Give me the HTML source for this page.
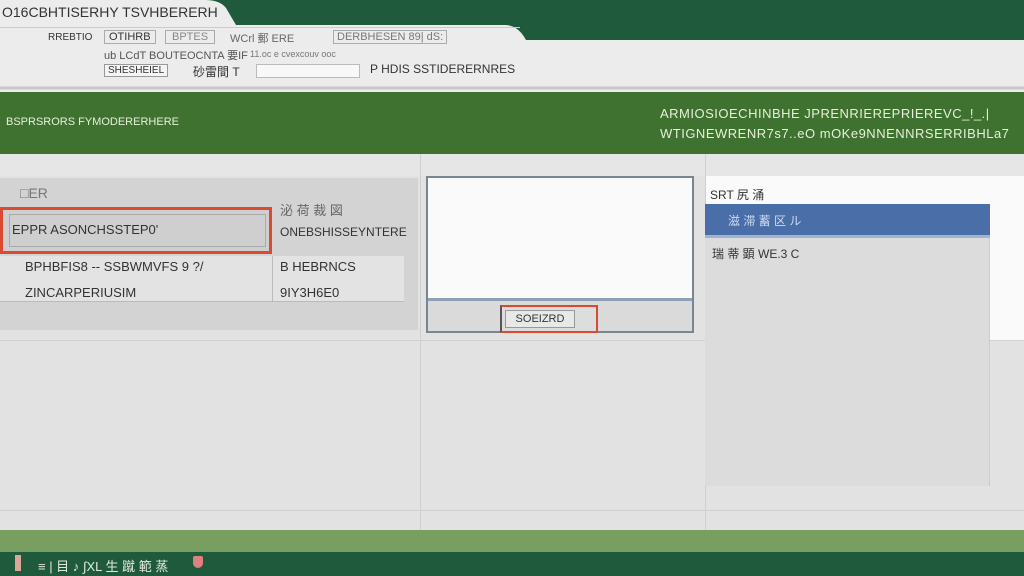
<!DOCTYPE html>
<html><head><meta charset="utf-8"><style>
*{margin:0;padding:0;box-sizing:border-box}
body{width:1024px;height:576px;overflow:hidden;background:#e2e2e2;font-family:"Liberation Sans","Noto Sans CJK SC",sans-serif;position:relative;font-size:12px;color:#333}
.a{position:absolute}
.t{position:absolute;white-space:nowrap}
</style></head><body>
<div class="a" style="left:0;top:0;width:1024px;height:40px;background:#1f5a3c"></div>
<svg class="a" style="left:0;top:0" width="1024" height="92"><path d="M0 0H205 Q220 0 226 8 L236 25 H505 Q518 25 526 40 H1024 V92 H0Z" fill="#ececec"/><path d="M0 88H1024" stroke="#c8c8c8" stroke-width="3"/></svg>
<div class="t" style="left:2px;top:4px;font-size:14px;color:#333">O16CBHTISERHY TSVHBERERH</div>
<div class="a" style="left:0;top:27px;width:520px;height:50px;border-top:1px solid #ccc"></div>
<div class="t" style="left:48px;top:32px;font-size:10px">RREBTIO</div>
<div class="t" style="left:104px;top:30px;font-size:11px;border:1px solid #aaa;padding:0 4px">OTIHRB</div>
<div class="t" style="left:165px;top:30px;font-size:11px;border:1px solid #aaa;padding:0 6px;color:#888">BPTES</div>
<div class="t" style="left:230px;top:30px;font-size:11px;color:#666">WCrl 郵 ERE</div>
<div class="t" style="left:333px;top:30px;font-size:11px;border:1px solid #aaa;padding:0 3px;color:#777">DERBHESEN 89| dS:</div>
<div class="t" style="left:104px;top:47px;font-size:11px;color:#555">ub LCdT BOUTEOCNTA 要IF</div>
<div class="t" style="left:250px;top:49px;font-size:9px;color:#777">11.oc e cvexcouv ooc</div>
<div class="t" style="left:104px;top:64px;font-size:10px;border:1px solid #999;padding:0 3px;background:#f4f4f4">SHESHEIEL</div>
<div class="t" style="left:193px;top:63px;font-size:12px">砂雷間 T</div>
<div class="a" style="left:256px;top:64px;width:104px;height:14px;background:#f8f8f8;border:1px solid #bbb"></div>
<div class="t" style="left:370px;top:62px;font-size:12px">P  HDIS SSTIDERERNRES</div>
<div class="a" style="left:0;top:92px;width:1024px;height:62px;background:#3f7230"></div>
<div class="t" style="left:6px;top:116px;font-size:11px;color:#e6f0d8">BSPRSRORS FYMODERERHERE</div>
<div class="t" style="left:660px;top:106px;font-size:13px;color:#e6f0d8;letter-spacing:0.5px">ARMIOSIOECHINBHE JPRENRIEREPRIEREVC_!_.|</div>
<div class="t" style="left:660px;top:126px;font-size:13px;color:#e6f0d8;letter-spacing:0.5px">WTIGNEWRENR7s7..eO mOKe9NNENNRSERRIBHLa7</div>
<div class="a" style="left:0;top:154px;width:1024px;height:22px;background:#e6e6e6"></div>
<div class="a" style="left:0;top:178px;width:418px;height:152px;background:#d3d3d3"></div>
<div class="t" style="left:20px;top:185px;font-size:14px;color:#777">□ER</div>
<div class="a" style="left:0;top:207px;width:272px;height:47px;border:3px solid #d94a32;background:#cfcfcf"></div>
<div class="a" style="left:9px;top:214px;width:257px;height:33px;border:1px solid #aaa"></div>
<div class="t" style="left:12px;top:222px;font-size:13px">EPPR ASONCHSSTEP0'</div>
<div class="t" style="left:280px;top:200px;font-size:13px;color:#666">泌 荷 裁 図</div>
<div class="t" style="left:280px;top:225px;font-size:12px">ONEBSHISSEYNTERE</div>
<div class="a" style="left:0;top:256px;width:404px;height:46px;background:#e3e3e3;border-bottom:1px solid #bbb"></div>
<div class="a" style="left:272px;top:256px;width:1px;height:46px;background:#bbb"></div>
<div class="t" style="left:25px;top:259px;font-size:13px">BPHBFIS8 -- SSBWMVFS 9 ?/</div>
<div class="t" style="left:25px;top:285px;font-size:13px">ZINCARPERIUSIM</div>
<div class="t" style="left:280px;top:259px;font-size:13px">B HEBRNCS</div>
<div class="t" style="left:280px;top:285px;font-size:13px">9IY3H6E0</div>
<div class="a" style="left:420px;top:154px;width:1px;height:376px;background:#cfcfcf"></div>
<div class="a" style="left:705px;top:154px;width:1px;height:376px;background:#cfcfcf"></div>
<div class="a" style="left:0;top:340px;width:1024px;height:1px;background:#d0d0d0"></div>
<div class="a" style="left:0;top:510px;width:1024px;height:1px;background:#d0d0d0"></div>
<div class="a" style="left:426px;top:176px;width:268px;height:157px;background:#dadada;border:2px solid #7a8592"></div>
<div class="a" style="left:428px;top:178px;width:264px;height:123px;background:#fafafa;border-bottom:3px solid #8da0b4"></div>
<div class="a" style="left:500px;top:305px;width:98px;height:28px;border:2px solid #d94a32;border-left-color:#555;background:#ddd"></div>
<div class="a" style="left:505px;top:310px;width:70px;height:18px;border:1px solid #999;background:#e8e8e8;font-size:11px;text-align:center;line-height:16px">SOEIZRD</div>
<div class="a" style="left:706px;top:176px;width:318px;height:164px;background:#fafafa"></div>
<div class="t" style="left:710px;top:186px;font-size:12px">SRT 尻 涌</div>
<div class="a" style="left:705px;top:204px;width:285px;height:282px;background:#dcdcdc;border-right:1px solid #ccc"></div>
<div class="a" style="left:705px;top:204px;width:285px;height:34px;background:#4a6ea8;border-bottom:3px solid #a0b4cc"></div>
<div class="t" style="left:728px;top:212px;font-size:12px;color:#cfdcf0">滋 滞 蓄 区 ル</div>
<div class="t" style="left:712px;top:245px;font-size:12px">瑞 蒂 顕 WE.3 C</div>
<div class="a" style="left:0;top:530px;width:1024px;height:22px;background:#789e60"></div>
<div class="a" style="left:0;top:552px;width:1024px;height:24px;background:#1f5a3c"></div>
<div class="a" style="left:15px;top:555px;width:6px;height:16px;background:#d8a898"></div>
<div class="t" style="left:38px;top:556px;font-size:13px;color:#e0e8dc">≡ | 目 ♪ ∫XL 生 蹴 範 蒸</div>
<div class="a" style="left:193px;top:556px;width:10px;height:12px;background:#e08080;border-radius:2px 2px 5px 5px"></div>
</body></html>
